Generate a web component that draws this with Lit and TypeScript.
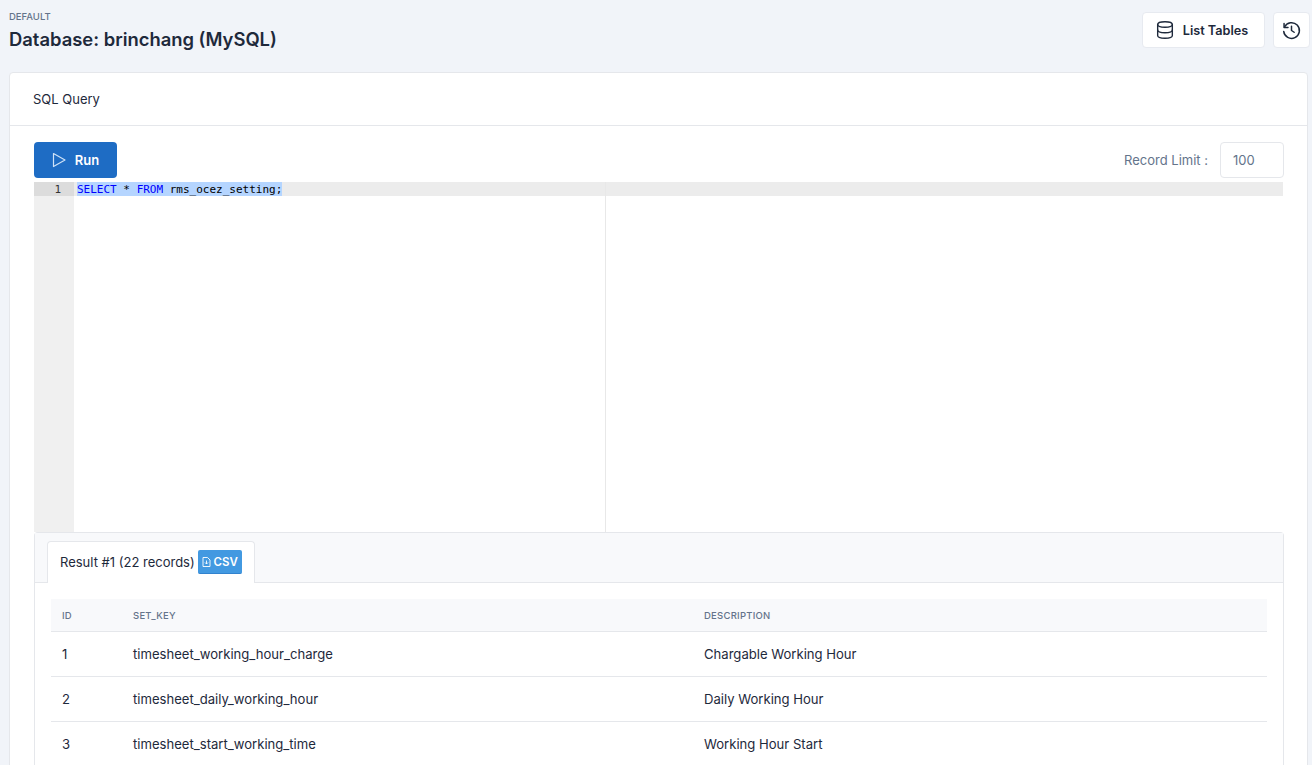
import { LitElement, html, css } from "lit";
import { customElement } from "lit/decorators.js";

const rows = [
  ["1", "timesheet_working_hour_charge", "Chargable Working Hour"],
  ["2", "timesheet_daily_working_hour", "Daily Working Hour"],
  ["3", "timesheet_start_working_time", "Working Hour Start"],
];

@customElement("app-root")
export class AppRoot extends LitElement {
  static styles = css`
    :host { display: block; height: 765px; overflow: hidden; background: #f1f4f9; font-family: Inter, "Noto Sans", sans-serif; color: #1e293b; font-size: 13px; }
    * { box-sizing: border-box; }
    .top { display: flex; justify-content: space-between; height: 72px; padding: 12px 2px 0 9px; }
    .eyebrow { font-size: 9.5px; line-height: 10px; font-weight: 500; color: #64748b; text-transform: uppercase; }
    h1 { margin: 3px 0 0; font-size: 18.4px; line-height: 28px; font-weight: 600; color: #1e293b; }
    .actions { display: flex; gap: 8px; }
    .btn { height: 36px; background: #fff; border: 1px solid #e7eaf0; border-radius: 4px; display: flex; align-items: center; justify-content: center; font-weight: 600; font-size: 12.7px; color: #1e293b; }
    .list { width: 123px; gap: 7px; padding-right: 5px; }
    .hist { width: 37px; }
    .card { margin: 0 4px 0 9px; background: #fff; border: 1px solid #e5e7eb; border-radius: 4px; height: 800px; }
    .card-head { height: 53px; padding: 0 23px; display: flex; align-items: center; font-size: 13px; border-bottom: 1px solid #e5e7eb; }
    .card-body { padding: 16px 24px 0; }
    .toolbar { display: flex; justify-content: space-between; align-items: center; height: 36px; margin: 0 -1px 4px 0; }
    .run { width: 83px; height: 36px; border: 0; border-radius: 4px; background: #1e6cc4; color: #fff; font: 600 13px Inter, sans-serif; display: flex; align-items: center; justify-content: center; gap: 8px; padding: 0 1px 0 0; }
    .limit { display: flex; align-items: center; gap: 12px; font-size: 13px; color: #64748b; }
    .limit-box { width: 64px; height: 36px; border: 1px solid #e5e7eb; border-radius: 4px; padding-left: 12px; display: flex; align-items: center; background: #fff; }
    .editor { position: relative; display: flex; height: 350px; }
    .gutter { width: 40px; background: #f0f0f0; font: 11px/15px "DejaVu Sans Mono", monospace; color: #333; }
    .gutter-active { height: 14px; background: #dcdcdc; text-align: right; padding-right: 13px; }
    .code { flex: 1; }
    .line { height: 14px; background: #ececec; padding-left: 3px; font: 11px/15px "DejaVu Sans Mono", monospace; color: #000; }
    .sel { background: #b5d5ff; display: inline-block; height: 14px; }
    .kw { color: #0000ff; }
    .margin { position: absolute; left: 571px; top: 0; bottom: 0; width: 1px; background: #e8e8e8; }
    .results { border: 1px solid #e5e7eb; border-bottom: 0; border-radius: 4px 4px 0 0; height: 400px; margin-right: -1px; }
    .tabs { height: 50px; background: #f8f9fb; border-bottom: 1px solid #e5e7eb; padding: 8px 0 0 12px; }
    .tab { width: 208px; height: 42px; background: #fff; border: 1px solid #e5e7eb; border-bottom: 0; border-radius: 4px 4px 0 0; display: flex; align-items: center; gap: 3px; padding: 0 0 2px 12px; font-size: 13px; margin-bottom: -1px; position: relative; }
    .csv { width: 44px; height: 24px; background: #4299e1; color: #fff; border-radius: 2px; display: flex; align-items: center; justify-content: center; gap: 3px; padding-top: 1px; font-weight: 600; font-size: 11.5px; border-bottom: 1px solid #3182ce; }
    .table { margin: 16px 16px 0; }
    .row { display: grid; grid-template-columns: 71px 571px 1fr; align-items: center; padding-left: 11px; }
    .thead { height: 33px; background: #f8f9fb; border-bottom: 1px solid #e5e7eb; font-size: 9.5px; font-weight: 500; color: #64748b; text-transform: uppercase; letter-spacing: 0.25px; }
    .tr { height: 45px; border-bottom: 1px solid #e5e7eb; font-size: 13.1px; color: #1e293b; }
  `;

  render() {
    return html`
      <div class="top">
        <div>
          <div class="eyebrow">Default</div>
          <h1>Database: brinchang (MySQL)</h1>
        </div>
        <div class="actions">
          <div class="btn list">
            <svg width="22" height="22" viewBox="0 0 24 24" fill="none" stroke="#1e293b" stroke-width="1.5" stroke-linecap="round" stroke-linejoin="round"><path d="M12 3c4.4 0 8 1.3 8 3s-3.6 3-8 3-8-1.3-8-3 3.6-3 8-3z"/><path d="M4 6v12c0 1.7 3.6 3 8 3s8-1.3 8-3V6"/><path d="M4 12c0 1.7 3.6 3 8 3s8-1.3 8-3"/></svg>
            <span>List Tables</span>
          </div>
          <div class="btn hist">
            <svg width="21" height="21" viewBox="0 0 24 24" fill="none" stroke="#1e293b" stroke-width="1.7" stroke-linecap="round" stroke-linejoin="round"><path d="M12 7v5l3 2"/><path d="M3.1 13a9 9 0 1 0 .9-5"/><path d="M3.5 4v4.500H8"/></svg>
          </div>
        </div>
      </div>
      <div class="card">
        <div class="card-head">SQL Query</div>
        <div class="card-body">
          <div class="toolbar">
            <button class="run">
              <svg width="16" height="16" viewBox="0 0 16 16" fill="none" stroke="#cfe2f7" stroke-width="1.2" stroke-linejoin="round"><path d="M2.5 1.5 14 8 2.5 14.5z"/></svg>
              Run
            </button>
            <div class="limit">Record Limit :<div class="limit-box">100</div></div>
          </div>
          <div class="editor">
            <div class="gutter"><div class="gutter-active">1</div></div>
            <div class="code">
              <div class="line"><span class="sel"><span class="kw">SELECT</span> * <span class="kw">FROM</span> rms_ocez_setting;</span></div>
            </div>
            <div class="margin"></div>
          </div>
          <div class="results">
            <div class="tabs">
              <div class="tab">
                <span>Result #1 (22 records)</span>
                <span class="csv">
                  <svg width="9" height="10" viewBox="0 0 9 10" fill="none" stroke="#fff" stroke-width="0.9"><path d="M1 .5h4.5L8 3v6.5H1z"/><path d="M4.5 3.5v3.500M3 5.500 4.500 7 6 5.500"/></svg>
                  CSV
                </span>
              </div>
            </div>
            <div class="table">
              <div class="row thead"><span>ID</span><span>Set_key</span><span>Description</span></div>
              ${rows.map(r => html`<div class="row tr"><span>${r[0]}</span><span>${r[1]}</span><span>${r[2]}</span></div>`)}
            </div>
          </div>
        </div>
      </div>
    `;
  }
}
